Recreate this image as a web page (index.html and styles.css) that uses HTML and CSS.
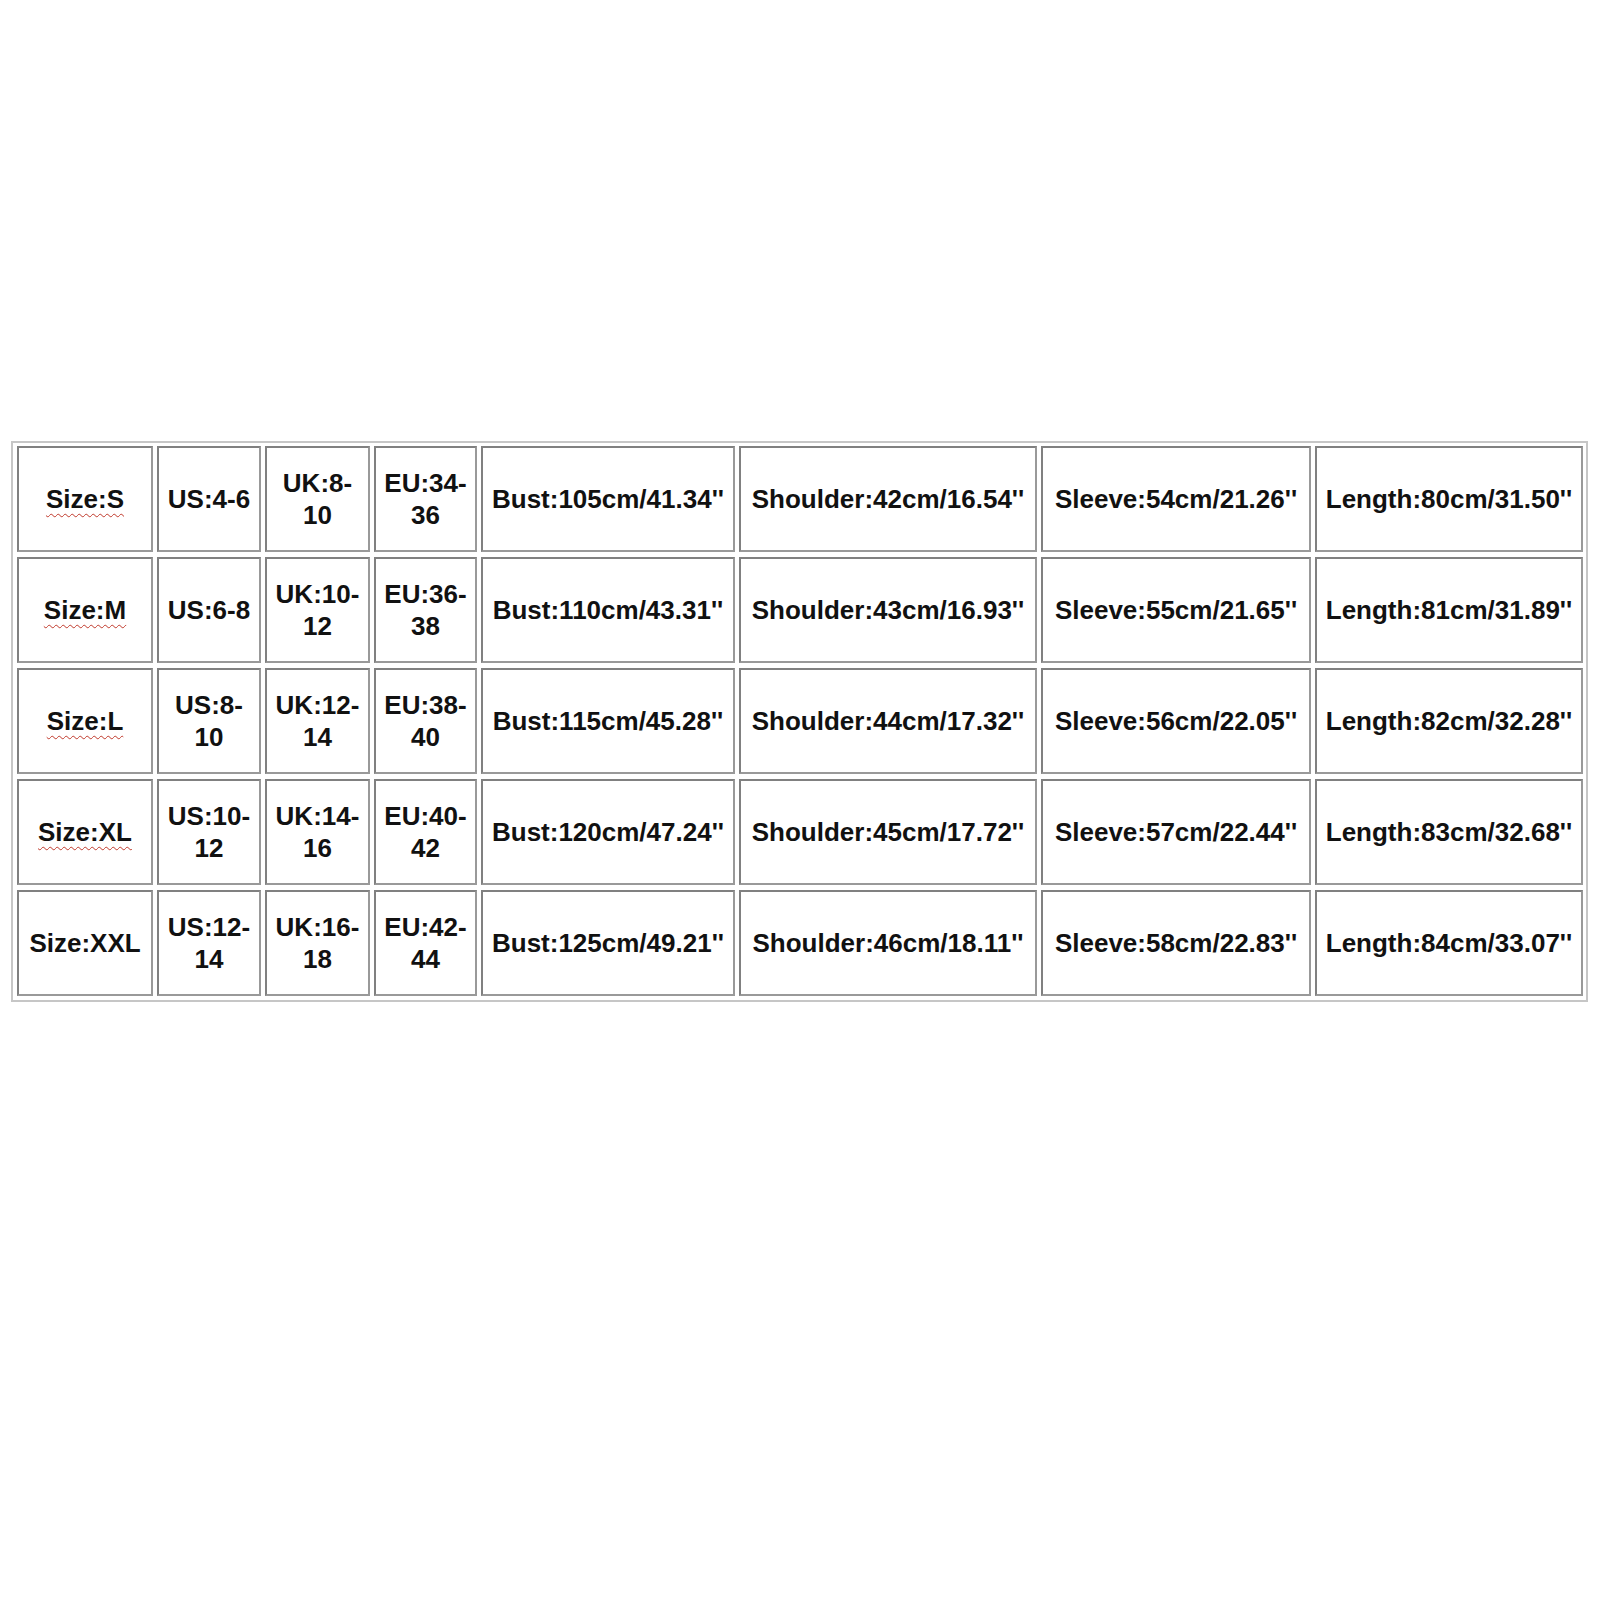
FILE: index.html
```html
<!DOCTYPE html>
<html>
<head>
<meta charset="utf-8">
<link rel="stylesheet" href="styles.css">
</head>
<body>
<div class="chart">
  <div class="grid">
    <div class="cell"><span class="spell">Size:S</span></div>
    <div class="cell">US:4-6</div>
    <div class="cell">UK:8-10</div>
    <div class="cell">EU:34-36</div>
    <div class="cell">Bust:105cm/41.34''</div>
    <div class="cell">Shoulder:42cm/16.54''</div>
    <div class="cell">Sleeve:54cm/21.26''</div>
    <div class="cell">Length:80cm/31.50''</div>

    <div class="cell"><span class="spell">Size:M</span></div>
    <div class="cell">US:6-8</div>
    <div class="cell">UK:10-12</div>
    <div class="cell">EU:36-38</div>
    <div class="cell">Bust:110cm/43.31''</div>
    <div class="cell">Shoulder:43cm/16.93''</div>
    <div class="cell">Sleeve:55cm/21.65''</div>
    <div class="cell">Length:81cm/31.89''</div>

    <div class="cell"><span class="spell">Size:L</span></div>
    <div class="cell">US:8-10</div>
    <div class="cell">UK:12-14</div>
    <div class="cell">EU:38-40</div>
    <div class="cell">Bust:115cm/45.28''</div>
    <div class="cell">Shoulder:44cm/17.32''</div>
    <div class="cell">Sleeve:56cm/22.05''</div>
    <div class="cell">Length:82cm/32.28''</div>

    <div class="cell"><span class="spell">Size:XL</span></div>
    <div class="cell">US:10-12</div>
    <div class="cell">UK:14-16</div>
    <div class="cell">EU:40-42</div>
    <div class="cell">Bust:120cm/47.24''</div>
    <div class="cell">Shoulder:45cm/17.72''</div>
    <div class="cell">Sleeve:57cm/22.44''</div>
    <div class="cell">Length:83cm/32.68''</div>

    <div class="cell">Size:XXL</div>
    <div class="cell">US:12-14</div>
    <div class="cell">UK:16-18</div>
    <div class="cell">EU:42-44</div>
    <div class="cell">Bust:125cm/49.21''</div>
    <div class="cell">Shoulder:46cm/18.11''</div>
    <div class="cell">Sleeve:58cm/22.83''</div>
    <div class="cell">Length:84cm/33.07''</div>
  </div>
</div>
</body>
</html>
```

FILE: styles.css
```css
html, body {
  margin: 0;
  padding: 0;
  background: #ffffff;
}

body {
  font-family: "Liberation Sans", Arial, sans-serif;
  color: #111111;
}

.chart {
  margin: 441px 0 0 11px;
  width: max-content;
  border: 2px solid #c6c6c6;
  padding: 3px 3px 4px 4px;
}

.grid {
  display: grid;
  grid-template-columns: 136px 104px 105px 103px 254px 298px 270px 268px;
  grid-auto-rows: 106px;
  column-gap: 4px;
  row-gap: 5px;
}

.cell {
  box-sizing: border-box;
  border: 2px solid #808080;
  border-right-color: #999999;
  border-bottom-color: #999999;
  padding: 0 6px;
  display: flex;
  align-items: center;
  justify-content: center;
  text-align: center;
  font-weight: bold;
  font-size: 26px;
  line-height: 32px;
  color: #111111;
}

.spell {
  text-decoration: underline wavy #c0392b;
  text-decoration-thickness: 1px;
  text-underline-offset: 5px;
}
```
